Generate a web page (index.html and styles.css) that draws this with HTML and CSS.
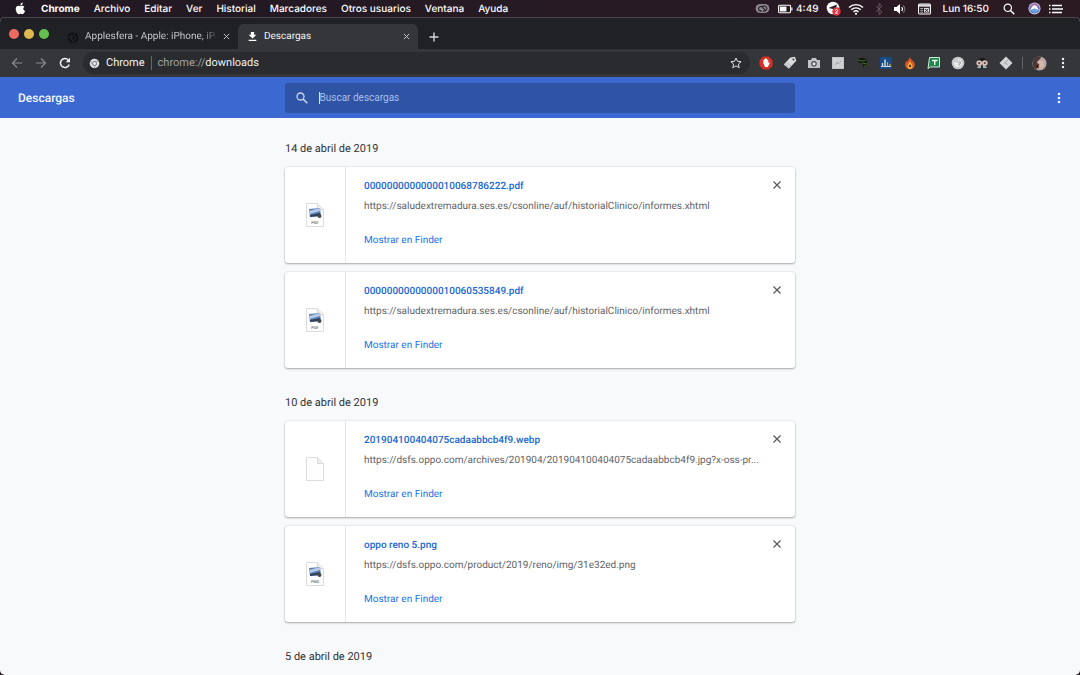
FILE: index.html
```html
<!DOCTYPE html>
<html lang="es">
<head>
<meta charset="utf-8">
<title>Descargas</title>
<link rel="stylesheet" href="styles.css">
</head>
<body>
<div class="screen">
  <header class="menubar">
    <svg class="apple" viewBox="0 0 24 24" width="13" height="13"><path fill="#fff" d="M17.1 12.6c0-2.400 2-3.600 2.100-3.700-1.200-1.700-3-1.900-3.600-2-1.500-.1-3 .9-3.700.9-.8 0-2-.9-3.200-.9C5.500 7 3.200 9 3.200 12.800c0 3.600 2.900 9.600 5.800 9.600 1.200 0 1.900-.8 3.300-.8s2 .8 3.300.8c2.300 0 4.200-3.700 4.800-5.600-2.100-.9-3.300-2.300-3.300-4.200zM14.800 5.200C15.900 4 16.300 2.300 16.100.8c-1.500.1-4.700 1.600-4.300 5.500 1.100.1 2.300-.3 3-1.100z"/></svg>
    <nav class="menus"><span class="app">Chrome</span><span>Archivo</span><span>Editar</span><span>Ver</span><span>Historial</span><span>Marcadores</span><span>Otros usuarios</span><span>Ventana</span><span>Ayuda</span></nav>
    <div class="status">
      <svg class="cloud" viewBox="0 0 16 12" width="15" height="11"><rect x=".5" y="1" width="15" height="10" rx="5" fill="#8d878b"/><path d="M7.500 8.500a2.500 2.500 0 1 1 .5-4l3 3.500M8.500 8.500a2.800 2.800 0 1 0-1-4" fill="none" stroke="#2a1e27" stroke-width="1.200"/></svg>
      <svg class="battery" viewBox="0 0 16 10" width="15" height="10"><rect x=".6" y="1" width="12.800" height="8" rx="1" fill="none" stroke="#fff" stroke-width="1.100"/><path d="M2 2.400h7v5.200H2z" fill="#fff"/><path d="M14.800 3.500v3" stroke="#fff" stroke-width="1.200"/></svg>
      <span class="remaining">4:49</span>
      <svg class="telegram" viewBox="0 0 15 15" width="15" height="15"><circle cx="7" cy="7" r="6.300" fill="#fff"/><path d="M2.500 7 11 3.500 9.500 9 7 8z" fill="#2a1e27"/><circle cx="10.500" cy="10.500" r="4.200" fill="#e1363e"/><path d="M9.300 9.500c.2-1.500 2.400-1.300 2.300 0 0 1-1.300 1.500-2.300 2.600h2.500" fill="none" stroke="#fff"/></svg>
      <svg class="wifi" viewBox="0 0 16 12" width="16" height="12"><g fill="none" stroke="#fff" stroke-width="1.400"><path d="M1 4.500a10 10 0 0 1 14 0M3.300 6.800a6.700 6.700 0 0 1 9.400 0M5.500 9a3.600 3.600 0 0 1 5 0"/></g><circle cx="8" cy="10.800" r="1.100" fill="#fff"/></svg>
      <svg class="bluetooth" viewBox="0 0 8 12" width="8" height="12"><path d="m1 3 6 6-3 2.500V.5L7 3 1 9" fill="none" stroke="#67545f"/></svg>
      <svg class="volume" viewBox="0 0 13 12" width="13" height="12"><path d="M1 4h2.500L7 1v10L3.500 8H1z" fill="#fff"/><path d="M8.700 4c1 1.200 1 2.800 0 4" fill="none" stroke="#fff" stroke-width="1.100"/><path d="M10.200 2.300c2 2.200 2 5.200 0 7.400" fill="none" stroke="#7d7078" stroke-width="1.100"/></svg>
      <svg class="calendar" viewBox="0 0 14 12" width="13" height="12"><rect x=".6" y=".6" width="12.800" height="10.800" rx="1.200" fill="none" stroke="#fff" stroke-width="1.100"/><path d="M1 1h12v2.500H1z" fill="#ddd"/><path d="M2.500 5.500h3m-3 2h3m-3 2h3" stroke="#bbb"/><path d="M6.500 4.800h5.500v5H6.500z" fill="#ddd"/><path d="m7.500 6 3.500 3m0-3L7.500 9" stroke="#2a1e27"/></svg>
      <span class="clock">Lun 16:50</span>
      <svg class="lens" viewBox="0 0 12 12" width="12" height="12"><circle cx="4.800" cy="4.800" r="3.700" fill="none" stroke="#fff" stroke-width="1.200"/><path d="m7.500 7.500 3.800 3.800" stroke="#fff" stroke-width="1.500"/></svg>
      <svg class="siri" viewBox="0 0 14 14" width="13" height="13"><circle cx="7" cy="7" r="6.500" fill="#d5cbe3"/><circle cx="7" cy="7" r="5.500" fill="#5861b5"/><path d="M2.500 5c2-4 7-4 9 0-3 1-6 1-9 0" fill="#bd6fa9"/><path d="M2 8c3 5 7 5 10 0-3-1-7-1-10 0" fill="#65a2df"/><path d="M2.500 8.500Q4 4 7 3.500q3 .5 4.500 5L7 7z" fill="#fff"/></svg>
      <svg class="list" viewBox="0 0 14 10" width="14" height="10"><path d="M0 1.500h1.500M3 1.500h10M0 5h1.500M3 5h11M0 8.500h1.500M3 8.500h10" stroke="#fff" stroke-width="1.500"/></svg>
    </div>
  </header>

  <div class="browser">
    <div class="tabstrip">
      <div class="lights"><i class="red"></i><i class="yellow"></i><i class="green"></i></div>
      <div class="tab">
        <svg viewBox="0 0 12 12" width="12" height="12"><circle cx="6" cy="6.500" r="4.300" fill="none" stroke="#0b0c0d" stroke-width="1.500" stroke-dasharray="6 1"/><path d="M5 4.500h2v3H5" fill="none" stroke="#0b0c0d"/></svg>
        <span class="tab-title fading">Applesfera - Apple: iPhone, iPa</span>
        <button class="close" aria-label="Cerrar Applesfera"><svg viewBox="0 0 8 8" width="7" height="7"><path d="m1 1 6 6m0-6L1 7" stroke="currentColor" stroke-width="1.100"/></svg></button>
      </div>
      <div class="tab active">
        <svg viewBox="0 0 12 12" width="11" height="11"><path d="M4.200 1h3.600v3.200h2.400L6 8.200 1.800 4.200h2.400zM1.800 9.500h8.400V11H1.800z" fill="#fff"/></svg>
        <span class="tab-title">Descargas</span>
        <button class="close" aria-label="Cerrar Descargas"><svg viewBox="0 0 8 8" width="7" height="7"><path d="m1 1 6 6m0-6L1 7" stroke="currentColor" stroke-width="1.100"/></svg></button>
      </div>
      <button class="newtab" aria-label="Nueva pestaña"><svg viewBox="0 0 10 10" width="10" height="10"><path d="M5 .5v9M.5 5h9" stroke="#d5d7da" stroke-width="1.400"/></svg></button>
    </div>

    <div class="toolbar">
      <div class="navigation">
        <button aria-label="Atrás"><svg viewBox="0 0 12 12" width="12" height="12"><path d="M11 6H1.500M6 1.500 1.500 6 6 10.500" fill="none" stroke="#898b8e" stroke-width="1.200"/></svg></button>
        <button aria-label="Adelante"><svg viewBox="0 0 12 12" width="12" height="12"><path d="M1 6h9.500M6 1.500 10.500 6 6 10.500" fill="none" stroke="#898b8e" stroke-width="1.200"/></svg></button>
        <button aria-label="Volver a cargar"><svg viewBox="0 0 12 12" width="12" height="12"><path d="M10.200 7.500A4.500 4.500 0 1 1 9.300 3" fill="none" stroke="#f1f2f3" stroke-width="1.500"/><path d="M11 .8v4.400H6.600z" fill="#f1f2f3"/></svg></button>
      </div>
      <div class="omnibox">
        <svg viewBox="0 0 12 12" width="11" height="11"><circle cx="6" cy="6" r="5.200" fill="#e3e4e6"/><circle cx="6" cy="6" r="2.300" fill="#e3e4e6" stroke="#6d6f73" stroke-width="1"/><path d="M6 3.500h5M4 7.300 1.700 3.500M8 7.300 5.600 11" stroke="#85878b" stroke-width=".8"/></svg>
        <span class="scheme-name">Chrome</span>
        <span class="address">chrome://<b>downloads</b></span>
        <button class="star" aria-label="Añadir a marcadores"><svg viewBox="0 0 12 12" width="12" height="12"><path d="m6 1 1.500 3.300 3.600.4-2.700 2.400.8 3.600L6 8.900l-3.200 1.800.8-3.600L.9 4.700l3.600-.4z" fill="none" stroke="#e1e2e4"/></svg></button>
      </div>
      <div class="extensions">
        <svg viewBox="0 0 14 14"><path d="M4.300.5h5.400l3.800 3.800v5.400l-3.800 3.800H4.300L.5 9.700V4.300z" fill="#d63228"/><path d="M4.300 7V4.300h1V3h1v-.7h1V3h1v1h1v3l1-.8.5.5-2 4.300H6z" fill="#fff"/></svg>
        <svg viewBox="0 0 14 14"><path d="m.8 8.500 6.500-7L12 .8l1.300 4-7.500 8z" fill="#d9dadb"/><path d="m2.600 8.300 3.600 3.300M4 6.700l4 3.500" stroke="#a9abad"/><circle cx="10.400" cy="3.500" r="1" fill="#444"/></svg>
        <svg viewBox="0 0 14 14"><path d="M1 4h3l1-2h4l1 2h3v8H1z" fill="#c1c4c7"/><circle cx="7" cy="7.800" r="2.800" fill="#4a4d51"/><circle cx="7" cy="7.800" r="1.600" fill="#dfe1e3"/></svg>
        <svg viewBox="0 0 14 14"><path d="M1 1h12v12H1z" fill="#bfc1c2"/><path d="M2 2h10v10H2z" fill="#cfd0d1"/><path d="m4 9 2-3 1 2 3-3" fill="none" stroke="#a2a4a6"/></svg>
        <svg viewBox="0 0 14 14"><path d="M2 4c3-3 8-3 10 0v7H8V8L3 6z" fill="#11170f"/><path d="m2 4 5 1 4-1M7 7l5 1M9 10h3" stroke="#456d28" fill="none"/></svg>
        <svg viewBox="0 0 14 14"><path d="M1 1h12v12H1z" fill="#164b86"/><path d="M3.500 10V7M6 10V3.500" stroke="#e1e8ef" stroke-width="1.300"/><path d="M8.500 10V6m2.500 4V8" stroke="#e29a36" stroke-width="1.300"/><path d="M2 10.500h10" stroke="#ddd"/></svg>
        <svg viewBox="0 0 14 14"><path d="M7 .8c0 3 4.800 4 4.800 8 0 6-9.600 6-9.600 0 0-2 1-4 2-4l.5 2C4.300 4 6.500 3 7 .8" fill="#d65825"/><path d="M7 5c0 2 2.500 3 2.500 5 0 4-5 4-5 0C4.500 8 7 7 7 5" fill="#ffbd48"/><circle cx="7" cy="10" r="1.400" fill="#7d3520"/></svg>
        <svg viewBox="0 0 14 14"><path d="M2.500 1.500h10v9.500h-9L1 12.500z" fill="#198945" stroke="#d5e7da"/><path d="M5 4.500h5.500M7.700 4v5" stroke="#fff" stroke-width="1.400"/></svg>
        <svg viewBox="0 0 14 14"><circle cx="7" cy="7" r="6.300" fill="#c8cacb"/><path d="M7 4a3 3 0 1 1-3 3l3 1" fill="none" stroke="#f5f5f5" stroke-width="1.500"/><path d="M8.500 4.500a3 3 0 0 1-1 5" fill="none" stroke="#9c9fa0"/></svg>
        <svg viewBox="0 0 14 14"><path d="M2.500 5c0-4 9-4 9 0z" fill="#17191c"/><path d="M2 12c1-4 9-4 10 0z" fill="#aeb3b6"/><path d="M6 9.500h2V12H6z" fill="#222"/><circle cx="4.200" cy="7" r="2.800" fill="#dac3bc"/><circle cx="9.800" cy="7" r="2.800" fill="#dac3bc"/><circle cx="4.200" cy="7" r="1.100" fill="#503b3d"/><circle cx="9.800" cy="7" r="1.100" fill="#503b3d"/></svg>
        <svg viewBox="0 0 14 14"><path d="m7 .5 6.500 6.500L7 13.500.5 7z" fill="#d2d4d6"/><path d="M9 4 5.500 7 9 8.500" fill="none" stroke="#b1b4b6" stroke-width="1.300"/></svg>
      </div>
      <span class="divider"></span>
      <button class="avatar" aria-label="Perfil"><svg viewBox="0 0 16 16" width="15" height="15"><circle cx="8" cy="8" r="7.500" fill="#bba7a1"/><path d="M1 9C0 3 5-.5 10 1L6 6l2 3-3 5C3 14 1 12 1 9" fill="#493a38"/><path d="M5 7c3-4 7-3 8 1 0 4-3 6-6 5l1-4z" fill="#d4b5a9"/><path d="m4 10 3-1v4" stroke="#784333"/></svg></button>
      <button class="more" aria-label="Menú"><svg viewBox="0 0 4 12" width="4" height="12"><g fill="#f1f2f3"><circle cx="2" cy="2" r="1.200"/><circle cx="2" cy="6" r="1.200"/><circle cx="2" cy="10" r="1.200"/></g></svg></button>
    </div>

    <div class="page-header">
      <h1>Descargas</h1>
      <label class="search"><svg viewBox="0 0 12 12" width="12" height="12"><circle cx="4.500" cy="4.500" r="3.500" fill="none" stroke="#c8d6f4" stroke-width="1.300"/><path d="m7 7 4.300 4.300" stroke="#c8d6f4" stroke-width="1.600"/></svg><span class="caret"></span><input type="text" placeholder="Buscar descargas" aria-label="Buscar descargas"></label>
      <button class="more" aria-label="Más acciones"><svg viewBox="0 0 4 12" width="4" height="12"><g fill="#e8f0ff"><circle cx="2" cy="2" r="1.300"/><circle cx="2" cy="6" r="1.300"/><circle cx="2" cy="10" r="1.300"/></g></svg></button>
    </div>

    <main class="downloads">
      <section>
        <h2>14 de abril de 2019</h2>
        <article class="card">
          <div class="file"><svg viewBox="0 0 20 26" width="20" height="26"><path d="M1.500 1.500h11l6 6v17h-17z" fill="#fefefe" stroke="#dcdcdc"/><path d="M12.500 1.500v6h6" fill="#eee" stroke="#dadada"/><path d="m4 7 11-1 1 8-11 1z" fill="#5d7fb9"/><path d="m4 9 11-3v3L5 12z" fill="#b5c8e5"/><path d="m5 13 10-2v3l-10 1z" fill="#31425c"/><circle cx="14.500" cy="14" r="2" fill="#454a46"/><text x="10" y="22">PDF</text></svg></div>
          <div class="info"><a class="name" href="#">0000000000000010068786222.pdf</a><p class="url">https://saludextremadura.ses.es/csonline/auf/historialClinico/informes.xhtml</p><a class="show" href="#">Mostrar en Finder</a></div>
          <button class="remove" aria-label="Quitar de la lista"><svg viewBox="0 0 8 8" width="8" height="8"><path d="m.5.500 7 7m0-7-7 7" stroke="currentColor" stroke-width="1.200"/></svg></button>
        </article>
        <article class="card">
          <div class="file"><svg viewBox="0 0 20 26" width="20" height="26"><path d="M1.500 1.500h11l6 6v17h-17z" fill="#fefefe" stroke="#dcdcdc"/><path d="M12.500 1.500v6h6" fill="#eee" stroke="#dadada"/><path d="m4 7 11-1 1 8-11 1z" fill="#5d7fb9"/><path d="m4 9 11-3v3L5 12z" fill="#b5c8e5"/><path d="m5 13 10-2v3l-10 1z" fill="#31425c"/><circle cx="14.500" cy="14" r="2" fill="#454a46"/><text x="10" y="22">PDF</text></svg></div>
          <div class="info"><a class="name" href="#">0000000000000010060535849.pdf</a><p class="url">https://saludextremadura.ses.es/csonline/auf/historialClinico/informes.xhtml</p><a class="show" href="#">Mostrar en Finder</a></div>
          <button class="remove" aria-label="Quitar de la lista"><svg viewBox="0 0 8 8" width="8" height="8"><path d="m.5.500 7 7m0-7-7 7" stroke="currentColor" stroke-width="1.200"/></svg></button>
        </article>
      </section>
      <section>
        <h2>10 de abril de 2019</h2>
        <article class="card">
          <div class="file"><svg viewBox="0 0 20 26" width="20" height="26"><path d="M1.500 1.500h11l6 6v17h-17z" fill="#fefefe" stroke="#dcdcdc"/><path d="M12.500 1.500v6h6" fill="#eee" stroke="#dadada"/></svg></div>
          <div class="info"><a class="name" href="#">201904100404075cadaabbcb4f9.webp</a><p class="url">https://dsfs.oppo.com/archives/201904/201904100404075cadaabbcb4f9.jpg?x-oss-pr...</p><a class="show" href="#">Mostrar en Finder</a></div>
          <button class="remove" aria-label="Quitar de la lista"><svg viewBox="0 0 8 8" width="8" height="8"><path d="m.5.500 7 7m0-7-7 7" stroke="currentColor" stroke-width="1.200"/></svg></button>
        </article>
        <article class="card">
          <div class="file"><svg viewBox="0 0 20 26" width="20" height="26"><path d="M1.500 1.500h11l6 6v17h-17z" fill="#fefefe" stroke="#dcdcdc"/><path d="M12.500 1.500v6h6" fill="#eee" stroke="#dadada"/><path d="m4 7 11-1 1 8-11 1z" fill="#5d7fb9"/><path d="m4 9 11-3v3L5 12z" fill="#b5c8e5"/><path d="m5 13 10-2v3l-10 1z" fill="#31425c"/><circle cx="14.500" cy="14" r="2" fill="#454a46"/><text x="10" y="22">PNG</text></svg></div>
          <div class="info"><a class="name" href="#">oppo reno 5.png</a><p class="url">https://dsfs.oppo.com/product/2019/reno/img/31e32ed.png</p><a class="show" href="#">Mostrar en Finder</a></div>
          <button class="remove" aria-label="Quitar de la lista"><svg viewBox="0 0 8 8" width="8" height="8"><path d="m.5.500 7 7m0-7-7 7" stroke="currentColor" stroke-width="1.200"/></svg></button>
        </article>
      </section>
      <section><h2>5 de abril de 2019</h2></section>
    </main>
  </div>
</div>
</body>
</html>
```
FILE: styles.css
```css
* { box-sizing: border-box; }
body { margin: 0; font-family: Roboto, "Liberation Sans", sans-serif; background: #241a22; text-rendering: geometricPrecision; }
button { border: 0; padding: 0; background: none; color: inherit; display: flex; align-items: center; justify-content: center; }
svg { display: block; flex: none; }
h1, h2, p { margin: 0; }
a { text-decoration: none; }

.screen { height: 100vh; display: flex; flex-direction: column; overflow: hidden; }
.menubar { flex: none; height: 17px; padding: 0 17px 0 14px; display: flex; align-items: center; background: linear-gradient(90deg, #211923, #2b1a22); color: #fff; font: 500 10px/16px Inter, sans-serif; white-space: nowrap; }
.menus { display: flex; gap: 14px; margin-left: 14px; }
.app { font-weight: 700; }
.status { margin-left: auto; display: flex; align-items: center; }
.battery { margin-left: 8px; }
.remaining { margin-left: 3px; }
.telegram, .wifi { margin-left: 7px; }
.bluetooth { margin-left: 11px; }
.volume { margin-left: 10px; }
.calendar { margin-left: 12px; }
.clock { margin-left: 12px; }
.lens { margin-left: 14px; }
.siri { margin-left: 13px; }
.list { margin-left: 8px; }

.browser { flex: 1; min-height: 0; display: flex; flex-direction: column; border-radius: 5px; overflow: hidden; background: #f8f9fb; }
.tabstrip { flex: none; height: 32px; padding-top: 6px; display: flex; background: #202124; border-top: 1px solid #48484b; }
.lights { display: flex; gap: 5px; padding: 5px 0 0 9px; width: 58px; }
.lights i { width: 10px; height: 10px; border-radius: 50%; }
.red { background: #ed6a5f; }
.yellow { background: #e0b650; }
.green { background: #63bf4e; }
.tab { width: 180px; padding: 0 8px 0 9px; display: flex; align-items: center; gap: 6px; color: #c3c5c8; }
.active { background: #35363a; border-radius: 6px 6px 0 0; color: #f1f2f3; }
.tab-title { flex: 1; min-width: 0; white-space: nowrap; font-size: 10px; line-height: 14px; }
.fading { mask-image: linear-gradient(90deg, #000 88%, #0003); }
.close { width: 8px; color: #c4c6c9; }
.newtab { width: 32px; }

.toolbar { flex: none; height: 28px; padding-right: 15px; display: flex; align-items: center; background: #35363a; color: #f1f2f3; }
.navigation { display: flex; gap: 12px; padding: 0 12px 0 11px; }
.omnibox { flex: 1; height: 22px; border-radius: 11px; padding: 0 8px 0 6px; display: flex; align-items: center; background: #292b2e; font-size: 11px; line-height: 14px; }
.scheme-name { margin-left: 6px; padding-right: 6px; border-right: 1px solid #66686b; }
.address { margin-left: 6px; color: #a0a2a5; }
.address b { font-weight: 400; color: #f1f2f3; }
.star { margin-left: auto; }
.extensions { display: flex; gap: 10px; margin-left: 9px; }
.extensions svg { width: 14px; height: 14px; }
.divider { width: 1px; height: 12px; margin: 0 9px; background: #626467; }
.avatar { margin-right: 14px; }

.page-header { flex: none; height: 41px; padding: 0 19px 0 18px; display: grid; grid-template-columns: 1fr 510px 1fr; align-items: center; background: #3b69d1; }
.page-header h1 { color: #f2f6ff; font-size: 12px; font-weight: 500; line-height: 18px; }
.page-header .more { justify-self: end; }
.search { height: 30px; padding: 0 11px; display: flex; align-items: center; background: #3054a5; border-radius: 2px; }
.caret { width: 1px; height: 12px; margin-left: 11px; background: #dce6fb; }
.search input { flex: 1; border: 0; outline: 0; padding: 0; background: none; color: #fff; font: 400 10px/14px Roboto, sans-serif; }
.search input::placeholder { color: #a9bde8; opacity: 1; }

.downloads { flex: 1; min-height: 0; width: 510px; max-width: 100%; margin: 0 auto; padding-top: 23px; }
.downloads section { margin-bottom: 27px; }
.downloads h2 { margin-bottom: 10px; font-size: 11px; font-weight: 400; line-height: 16px; color: #303236; }
.card { min-height: 96px; margin-bottom: 9px; display: flex; position: relative; background: #fff; border-radius: 3px; box-shadow: 0 1px 2px #3c404366, 0 0 2px #3c404333; }
.file { width: 61px; border-right: 1px solid #e6e6e6; display: flex; align-items: center; justify-content: center; }
.file text { font: 700 4px Roboto, sans-serif; fill: #777; text-anchor: middle; }
.info { flex: 1; min-width: 0; padding: 13px 28px 0 18px; display: flex; flex-direction: column; align-items: flex-start; font-size: 10px; line-height: 14px; }
.name { color: #1967d2; font-weight: 500; }
.url { margin-top: 6px; color: #5f6368; white-space: nowrap; }
.show { margin-top: 20px; color: #1a73e8; }
.remove { position: absolute; top: 14px; right: 14px; color: #55585c; }
```
